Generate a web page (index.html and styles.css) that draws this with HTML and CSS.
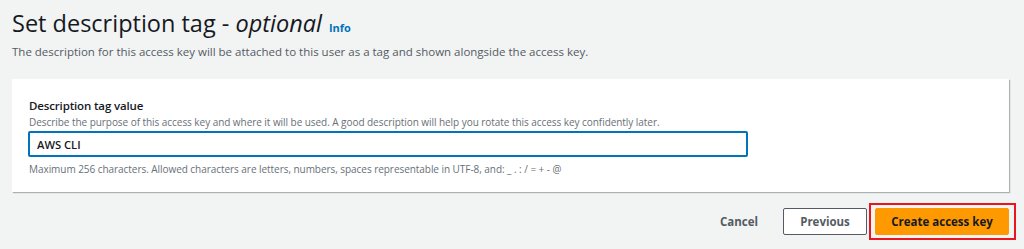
FILE: index.html
```html
<!DOCTYPE html>
<html lang="en">
<head>
<meta charset="utf-8">
<title>Set description tag</title>
<link rel="stylesheet" href="styles.css">
</head>
<body>
<main class="page">
  <header class="head">
    <h1 class="title">Set description tag - <em>optional</em><a class="info" href="#">Info</a></h1>
    <p class="subtitle">The description for this access key will be attached to this user as a tag and shown alongside the access key.</p>
  </header>
  <section class="card">
    <label class="label" for="desc">Description tag value</label>
    <p class="hint">Describe the purpose of this access key and where it will be used. A good description will help you rotate this access key confidently later.</p>
    <input id="desc" class="field" type="text" value="AWS CLI">
    <p class="constraint">Maximum 256 characters. Allowed characters are letters, numbers, spaces representable in UTF-8, and: _ . : / = + - @</p>
  </section>
  <div class="actions">
    <button class="btn btn-link" type="button">Cancel</button>
    <button class="btn btn-normal" type="button">Previous</button>
    <span class="highlight"><button class="btn btn-primary" type="button">Create access key</button></span>
  </div>
</main>
</body>
</html>
```

FILE: styles.css
```css
* { box-sizing: border-box; }
html, body { margin: 0; padding: 0; }
body {
  background: #f2f3f3;
  font-family: "Open Sans", "Noto Sans", sans-serif;
  color: #16191f;
  width: 1024px;
  height: 249px;
  overflow: hidden;
}
.page {
  padding: 0 8px 0 12px;
  display: flex;
  flex-direction: column;
}
.head { padding-top: 8px; }
.title {
  margin: 0;
  font-size: 23.5px;
  line-height: 30px;
  font-weight: 400;
  color: #16191f;
  white-space: nowrap;
}
.title em { font-style: italic; }
.info {
  margin-left: 7px;
  font-size: 11px;
  line-height: 1;
  font-weight: 700;
  color: #0073bb;
  text-decoration: none;
  vertical-align: baseline;
}
.subtitle {
  margin: 6px 0 0;
  font-size: 11.5px;
  line-height: 16px;
  color: #545b64;
}
.card {
  margin-top: 19px;
  width: 997px;
  background: #fff;
  box-shadow: 1px 1px 1px 0 rgba(0, 28, 36, 0.3);
  padding: 19px 17px 16px 17px;
  display: flex;
  flex-direction: column;
}
.label {
  font-size: 11.5px;
  line-height: 16px;
  font-weight: 600;
  letter-spacing: -0.15px;
  color: #16191f;
}
.hint {
  margin: 1px 0 0;
  font-size: 10px;
  line-height: 15px;
  letter-spacing: -0.05px;
  color: #687078;
}
.field {
  margin: 1px 0 0 -1px;
  width: 720px;
  height: 26px;
  border: 2px solid #0073bb;
  border-radius: 2px;
  padding: 0 7px;
  font-family: inherit;
  font-size: 11.2px;
  font-weight: 600;
  color: #16191f;
  background: #fff;
  outline: none;
}
.constraint {
  margin: 5px 0 0;
  font-size: 10px;
  line-height: 14px;
  letter-spacing: -0.05px;
  color: #687078;
}
.actions {
  margin-top: 11px;
  display: flex;
  justify-content: flex-end;
  align-items: center;
}
.btn {
  font-family: inherit;
  font-size: 11.5px;
  font-weight: 700;
  height: 27px;
  border-radius: 2px;
  cursor: pointer;
  padding: 0;
  white-space: nowrap;
}
.btn-link {
  background: none;
  border: none;
  color: #545b64;
  margin-right: 25px;
}
.btn-normal {
  background: #fff;
  border: 1px solid #545b64;
  color: #545b64;
  width: 84px;
  margin-right: 2px;
}
.highlight {
  display: flex;
  border: 2px solid #e8161e;
  padding: 3px 5px 3px 4px;
}
.btn-primary {
  background: #ff9900;
  border: 1px solid #ff9900;
  color: #16191f;
  width: 134px;
}
```
